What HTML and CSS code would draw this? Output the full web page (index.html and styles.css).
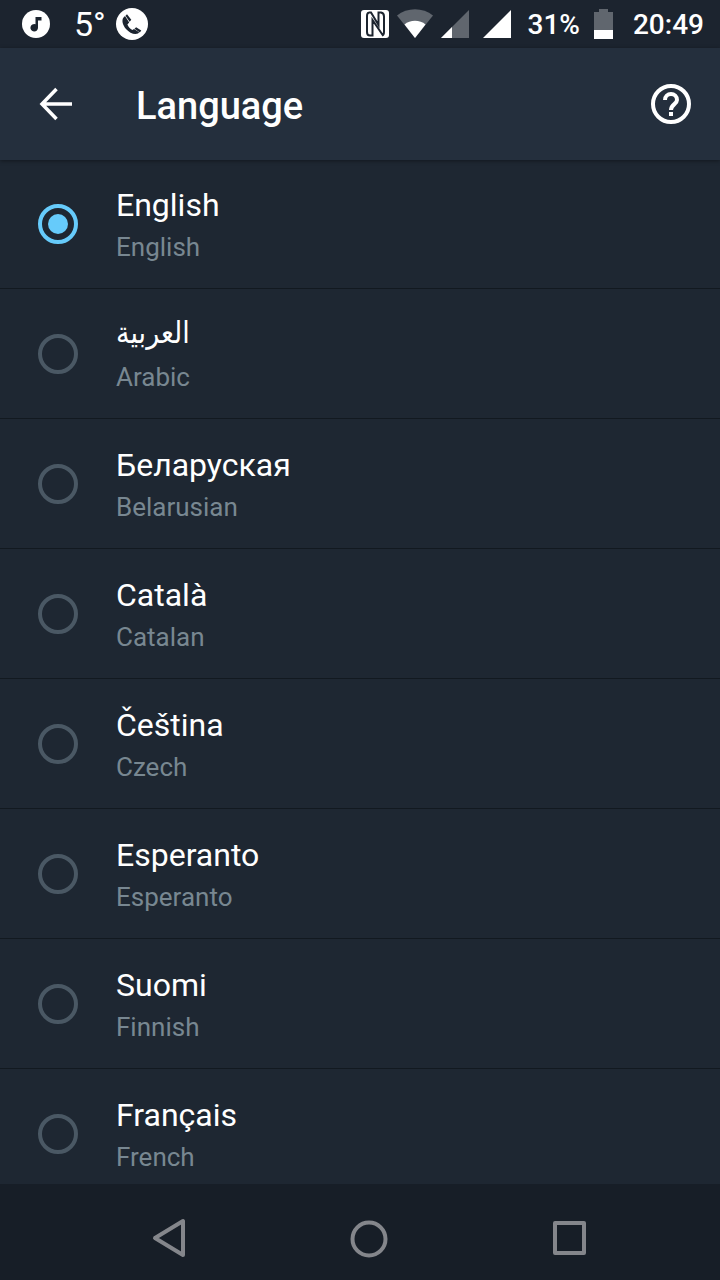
FILE: index.html
```
<!DOCTYPE html>
<html lang="en">
<head>
  <meta charset="UTF-8" />
  <meta name="viewport" content="width=device-width, initial-scale=1.0"/>
  <title>Language</title>
  <link rel="stylesheet" href="styles.css">
</head>
<body>
  <!-- Status bar -->
  <div class="status-bar">
    <svg class="icon-music" width="28" height="28" viewBox="0 0 28 28">
      <circle cx="14" cy="14" r="14" fill="#fff"/>
      <path d="M13.5 7h6v3.5h-3.500v7a3.800 3.800 0 1 1-2.500-3.300z" fill="#1c242f"/>
    </svg>
    <span class="temperature">5°</span>
    <svg width="32" height="32" viewBox="0 0 32 32">
      <circle cx="16" cy="16" r="16" fill="#fff"/>
      <path d="M7.500 9.500C5.500 12 6.500 17 10 21c3.500 4 8.500 6 12 4.500l1.200-1.200-5.200-3.300-1.600 1c-2.300-1.200-4-3.200-5-5.500l1.800-2L9 8z" fill="#1c242f"/>
      <path d="M9.500 7.700l1.500-1.500 4.300 5.600-1.700 1.900zM18.500 20.800l1.600-1.500 5.200 3.200-1.500 1.900z" fill="#1c242f"/>
    </svg>
    <div class="status-right">
      <svg class="icon-nfc" width="28" height="28" viewBox="0 0 28 28">
        <rect width="28" height="28" rx="3" fill="#fff"/>
        <path d="M8 2.500Q6 3 6 6v16q0 3.500 3 3.500h2.500V10L22 25.500M7.500 2.500H10L17.500 15V2.500H20q3 .5 3 4V22q0 3-2 3.500" fill="none" stroke="#1c242f" stroke-width="2"/>
      </svg>
      <svg class="icon-wifi" width="36" height="30" viewBox="0 0 36 30">
        <path d="M0 6.500C10-2 26-2 36 6.500L18 29z" fill="#60666e"/>
        <path d="M7.500 15.500C13 10.500 23 10.500 28.500 15.500L18 29z" fill="#fff"/>
      </svg>
      <svg class="icon-signal" width="28" height="28" viewBox="0 0 28 28">
        <path d="M28 0v28H0z" fill="#60666e"/>
        <path d="M11 17v11H0z" fill="#fff"/>
      </svg>
      <svg class="icon-signal" width="28" height="28" viewBox="0 0 28 28">
        <path d="M28 0v28H0z" fill="#fff"/>
      </svg>
      <span class="battery-level">31%</span>
      <svg width="19" height="30" viewBox="0 0 19 30">
        <path d="M5 0h9v3h5v18H0V3h5z" fill="#60666e"/>
        <path d="M0 21h19v9H0z" fill="#fff"/>
      </svg>
      <span class="clock">20:49</span>
    </div>
  </div>

  <!-- Title bar -->
  <header class="app-bar">
    <button class="icon-button" type="button" aria-label="Back">
      <svg width="40" height="40" viewBox="0 0 40 40" fill="none" stroke="#fff" stroke-width="3.500">
        <path d="M36 20H6M20.500 5L6 20l14.500 15"/>
      </svg>
    </button>
    <h1>Language</h1>
    <button class="icon-button" type="button" aria-label="Help">
      <svg width="40" height="40" viewBox="0 0 40 40" fill="none" stroke="#fff" stroke-width="4">
        <circle cx="20" cy="20" r="18"/>
        <path d="M14 16a6 6 0 1 1 12 0c0 4-6 4.500-6 10M20 28v4"/>
      </svg>
    </button>
  </header>

  <!-- Language list -->
  <main class="language-list">
    <label class="language">
      <input type="radio" name="language" value="en" checked>
      <span class="names"><span class="native">English</span><span class="translated">English</span></span>
    </label>
    <label class="language">
      <input type="radio" name="language" value="ar">
      <span class="names"><span class="native arabic" lang="ar">العربية</span><span class="translated">Arabic</span></span>
    </label>
    <label class="language">
      <input type="radio" name="language" value="be">
      <span class="names"><span class="native" lang="be">Беларуская</span><span class="translated">Belarusian</span></span>
    </label>
    <label class="language">
      <input type="radio" name="language" value="ca">
      <span class="names"><span class="native" lang="ca">Català</span><span class="translated">Catalan</span></span>
    </label>
    <label class="language">
      <input type="radio" name="language" value="cs">
      <span class="names"><span class="native" lang="cs">Čeština</span><span class="translated">Czech</span></span>
    </label>
    <label class="language">
      <input type="radio" name="language" value="eo">
      <span class="names"><span class="native" lang="eo">Esperanto</span><span class="translated">Esperanto</span></span>
    </label>
    <label class="language">
      <input type="radio" name="language" value="fi">
      <span class="names"><span class="native" lang="fi">Suomi</span><span class="translated">Finnish</span></span>
    </label>
    <label class="language">
      <input type="radio" name="language" value="fr">
      <span class="names"><span class="native" lang="fr">Français</span><span class="translated">French</span></span>
    </label>
  </main>

  <!-- Navigation buttons -->
  <nav class="nav-bar">
    <button class="icon-button" type="button" aria-label="Back">
      <svg width="40" height="40" viewBox="0 0 40 40" fill="none" stroke="#84868b" stroke-width="4" stroke-linejoin="round">
        <path d="M34 3v34L6 20z"/>
      </svg>
    </button>
    <button class="icon-button" type="button" aria-label="Home">
      <svg width="40" height="40" viewBox="0 0 40 40" fill="none" stroke="#84868b" stroke-width="4">
        <circle cx="20" cy="21" r="16.500"/>
      </svg>
    </button>
    <button class="icon-button" type="button" aria-label="Recent apps">
      <svg width="40" height="40" viewBox="0 0 40 40" fill="none" stroke="#84868b" stroke-width="4" stroke-linejoin="round">
        <rect x="6" y="5" width="29" height="30"/>
      </svg>
    </button>
  </nav>
</body>
</html>
```

FILE: styles.css
```
* {
  box-sizing: border-box;
}
body {
  margin: 0;
  height: 100vh;
  display: flex;
  flex-direction: column;
  overflow: hidden;
  background: #1e2732;
  color: #fff;
  font-family: Roboto, "Noto Sans", sans-serif;
}
svg {
  display: block;
  flex: none;
}
/* Status bar */
.status-bar {
  flex: none;
  display: flex;
  align-items: center;
  height: 48px;
  padding: 0 16px 0 22px;
  background: #1c242f;
  font-size: 28px;
  font-weight: 500;
}
.temperature {
  margin: 0 10px 0 24px;
  font-size: 34px;
  font-weight: 400;
}
.status-right {
  display: flex;
  align-items: center;
  margin-left: auto;
}
.icon-wifi {
  margin: 0 8px;
}
.icon-signal {
  margin-right: 14px;
}
.battery-level {
  margin: 0 14px 0 3px;
}
.clock {
  margin-left: 20px;
}
/* Title bar */
.app-bar {
  flex: none;
  position: relative;
  z-index: 1;
  display: flex;
  align-items: center;
  height: 112px;
  padding: 0 29px 0 36px;
  background: #242f3d;
  box-shadow: 0 1px 4px rgba(0, 0, 0, 0.4);
}
.app-bar h1 {
  flex: 1;
  margin: 0 0 0 60px;
  padding-top: 4px;
  font-size: 38px;
  font-weight: 500;
  line-height: 48px;
}
.icon-button {
  padding: 0;
  border: none;
  background: none;
  cursor: pointer;
}
/* Language list */
.language-list {
  flex: 1;
  min-height: 0;
  margin-top: -1px;
  overflow: hidden;
}
.language {
  display: flex;
  align-items: center;
  gap: 38px;
  height: 130px;
  padding: 0 38px;
  border-bottom: 1px solid #121920;
  cursor: pointer;
}
.language input {
  appearance: none;
  flex: none;
  width: 40px;
  height: 40px;
  margin: 0;
  border: 4px solid #4a5864;
  border-radius: 50%;
}
.language input:checked {
  border-color: #66cbfb;
  padding: 6px;
  background: #66cbfb content-box;
}
.names {
  display: flex;
  flex-direction: column;
  align-items: flex-start;
  padding-top: 2px;
}
.native {
  font-size: 32px;
  line-height: 44px;
}
/* Arabic glyphs sit lower in the line */
.arabic {
  padding-bottom: 4px;
  font-family: "DejaVu Sans Condensed", "DejaVu Sans", sans-serif;
  font-size: 30px;
  line-height: 40px;
}
.translated {
  font-size: 26px;
  line-height: 40px;
  color: #788791;
}
/* Navigation buttons */
.nav-bar {
  flex: none;
  display: grid;
  grid-template-columns: repeat(3, 200px);
  justify-content: center;
  place-items: center;
  height: 96px;
  padding: 12px 0 0 18px;
  background: #171e27;
}
```
